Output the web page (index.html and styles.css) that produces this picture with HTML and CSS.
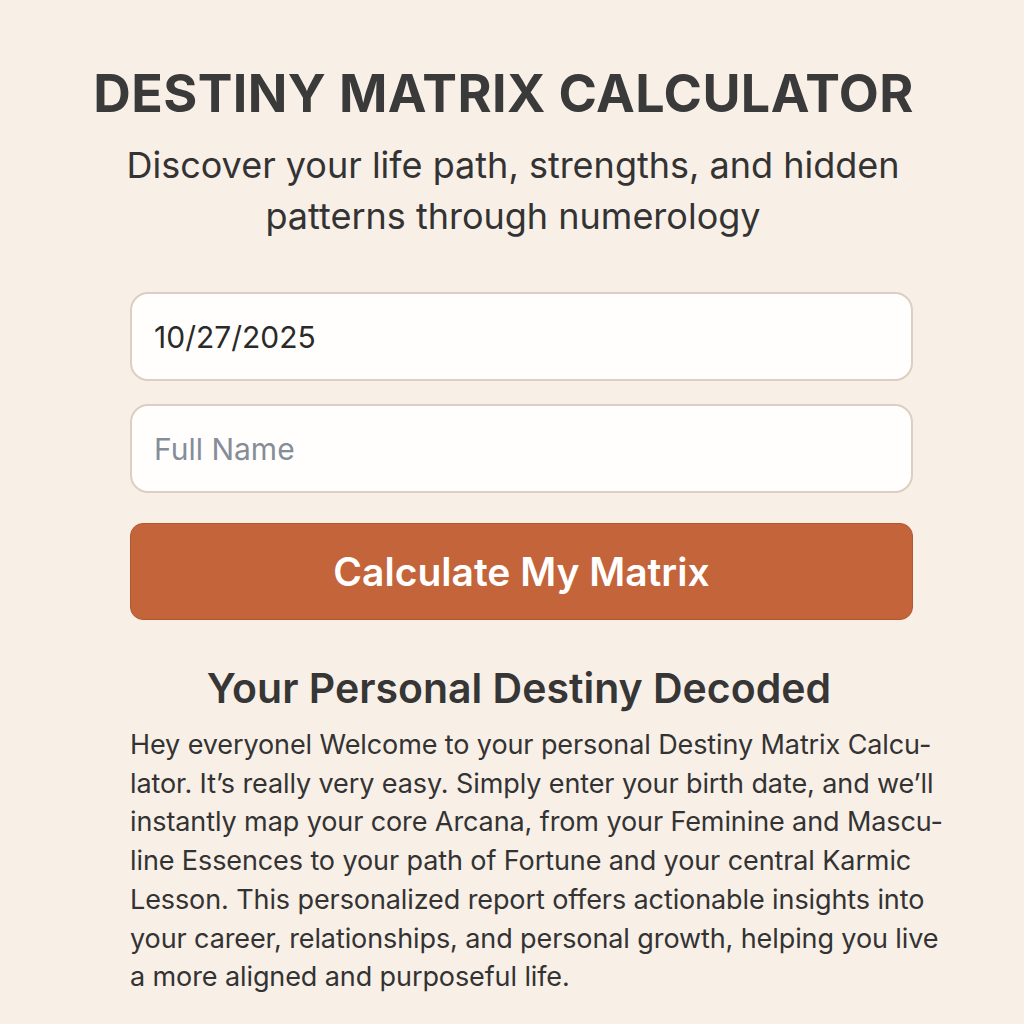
FILE: index.html
```html
<!DOCTYPE html>
<html lang="en">
<head>
<meta charset="utf-8">
<title>Destiny Matrix Calculator</title>
<link rel="stylesheet" href="styles.css">
</head>
<body>
<main class="page">
  <h1 class="title">DESTINY MATRIX CALCULATOR</h1>
  <p class="subtitle">Discover your life path, strengths, and hidden<br>patterns through numerology</p>
  <form class="form">
    <div class="field"><span class="value">10/27/2025</span></div>
    <div class="field"><span class="placeholder">Full Name</span></div>
    <button type="button" class="btn">Calculate My Matrix</button>
  </form>
  <h2 class="heading">Your Personal Destiny Decoded</h2>
  <p class="body">Hey everyonel Welcome to your personal Destiny Matrix Calcu-<br>lator. It’s really very easy. Simply enter your birth date, and we’ll<br>instantly map your core Arcana, from your Feminine and Mascu-<br>line Essences to your path of Fortune and your central Karmic<br>Lesson. This personalized report offers actionable insights into<br>your career, relationships, and personal growth, helping you live<br>a more aligned and purposeful life.</p>
</main>
</body>
</html>
```
FILE: styles.css
```css
html, body {
  margin: 0;
  padding: 0;
  background: #f8efe7;
}
body {
  font-family: Inter, "Noto Sans", sans-serif;
  color: #363636;
}
.page {
  width: 1024px;
  height: 1024px;
  box-sizing: border-box;
  padding: 62px 0 0 19px;
  display: flex;
  flex-direction: column;
  align-items: center;
}
.title {
  margin: 0 36px 0 0;
  font-size: 52px;
  font-weight: 700;
  line-height: 64px;
  color: #3a3a3a;
  letter-spacing: 0.4px;
  text-align: center;
}
.subtitle {
  margin: 14px 17px 0 0;
  font-size: 36px;
  font-weight: 400;
  line-height: 51px;
  text-align: center;
  color: #333;
}
.form {
  margin-top: 50px;
  width: 783px;
  display: flex;
  flex-direction: column;
  gap: 23px;
}
.field {
  height: 89px;
  box-sizing: border-box;
  background: #fffefc;
  border: 2px solid #dccfc1;
  border-radius: 18px;
  display: flex;
  align-items: center;
  padding: 0 22px;
  font-size: 30px;
}
.value { color: #2a2a2a; }
.placeholder { color: #858d99; }
.btn {
  margin-top: 7px;
  height: 97px;
  background: #c4643a;
  border: 1px solid #b55630;
  border-radius: 13px;
  color: #fff;
  font-family: Inter, "Noto Sans", sans-serif;
  font-size: 39px;
  font-weight: 600;
  cursor: pointer;
}
.heading {
  margin: 42px 5px 0 0;
  font-size: 41px;
  font-weight: 600;
  line-height: 52px;
  color: #363636;
  text-align: center;
}
.body {
  margin: 12px 0 0 0;
  width: 783px;
  font-size: 27px;
  line-height: 38.7px;
  letter-spacing: -0.1px;
  white-space: nowrap;
  color: #333;
}
```
